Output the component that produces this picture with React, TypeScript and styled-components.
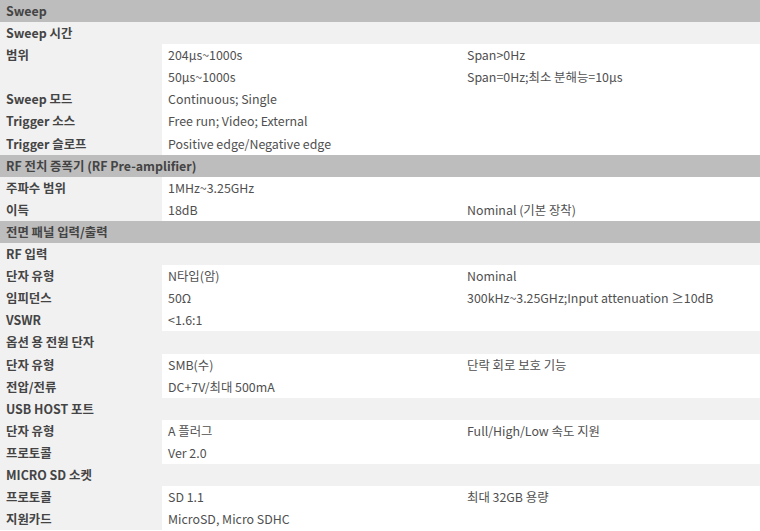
import styled, { createGlobalStyle } from "styled-components";

type Row =
  | { kind: "section"; label: string }
  | { kind: "group"; label: string }
  | { kind: "item"; label: string; value: string; note?: string };

const rows: Row[] = [
  { kind: "section", label: "Sweep" },
  { kind: "group", label: "Sweep 시간" },
  { kind: "item", label: "범위", value: "204μs~1000s", note: "Span>0Hz" },
  { kind: "item", label: "", value: "50μs~1000s", note: "Span=0Hz;최소 분해능=10μs" },
  { kind: "item", label: "Sweep 모드", value: "Continuous; Single" },
  { kind: "item", label: "Trigger 소스", value: "Free run; Video; External" },
  { kind: "item", label: "Trigger 슬로프", value: "Positive edge/Negative edge" },
  { kind: "section", label: "RF 전치 증폭기 (RF Pre-amplifier)" },
  { kind: "item", label: "주파수 범위", value: "1MHz~3.25GHz" },
  { kind: "item", label: "이득", value: "18dB", note: "Nominal (기본 장착)" },
  { kind: "section", label: "전면 패널 입력/출력" },
  { kind: "group", label: "RF 입력" },
  { kind: "item", label: "단자 유형", value: "N타입(암)", note: "Nominal" },
  {
    kind: "item",
    label: "임피던스",
    value: "50Ω",
    note: "300kHz~3.25GHz;Input attenuation ≥10dB",
  },
  { kind: "item", label: "VSWR", value: "<1.6:1" },
  { kind: "group", label: "옵션 용 전원 단자" },
  { kind: "item", label: "단자 유형", value: "SMB(수)", note: "단락 회로 보호 기능" },
  { kind: "item", label: "전압/전류", value: "DC+7V/최대 500mA" },
  { kind: "group", label: "USB HOST 포트" },
  { kind: "item", label: "단자 유형", value: "A 플러그", note: "Full/High/Low 속도 지원" },
  { kind: "item", label: "프로토콜", value: "Ver 2.0" },
  { kind: "group", label: "MICRO SD 소켓" },
  { kind: "item", label: "프로토콜", value: "SD 1.1", note: "최대 32GB 용량" },
  { kind: "item", label: "지원카드", value: "MicroSD, Micro SDHC" },
];

const App = () => {
  return (
    <>
      <GlobalStyle />
      <SpecTable>
        {rows.map((row, i) => {
          if (row.kind === "section") {
            return <SectionRow key={i}>{row.label}</SectionRow>;
          }
          if (row.kind === "group") {
            return <GroupRow key={i}>{row.label}</GroupRow>;
          }
          return (
            <ItemRow key={i}>
              <LabelCell>{row.label}</LabelCell>
              <ValueCell>{row.value}</ValueCell>
              <ValueCell>{row.note}</ValueCell>
            </ItemRow>
          );
        })}
      </SpecTable>
    </>
  );
};

export default App;

const GlobalStyle = createGlobalStyle`
  html, body {
    margin: 0;
    padding: 0;
    background: #fff;
  }
  body {
    font-family: "Noto Sans CJK KR", "Noto Sans", sans-serif;
    font-size: 12.4px;
    line-height: 22.1px;
    color: #505050;
  }
`;

const SpecTable = styled.div`
  width: 760px;
  display: flex;
  flex-direction: column;
`;

const SectionRow = styled.div`
  background: #bdbdbd;
  color: #444;
  font-weight: 700;
  padding: 0 6px;
  height: 22.1px;
`;

const GroupRow = styled.div`
  background: #f1f1f1;
  color: #444;
  font-weight: 700;
  padding: 0 6px;
  height: 22.1px;
`;

const ItemRow = styled.div`
  display: grid;
  grid-template-columns: 162px 299px 1fr;
  height: 22.1px;
`;

const LabelCell = styled.div`
  background: #f1f1f1;
  color: #444;
  font-weight: 700;
  padding: 0 6px;
  white-space: nowrap;
`;

const ValueCell = styled.div`
  padding: 0 6px;
  white-space: nowrap;
`;
